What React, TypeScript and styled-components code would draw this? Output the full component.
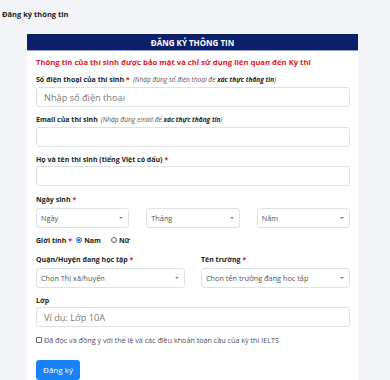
import styled, { createGlobalStyle } from "styled-components";

const GlobalStyle = createGlobalStyle`
  body {
    margin: 0;
    background: #f4f5f9;
    font-family: "Open Sans", "Noto Sans", sans-serif;
  }
  * { box-sizing: border-box; }
`;

const Page = styled.div`
  padding: 9px 0 0 2px;
`;

const PageTitle = styled.div`
  font-size: 7.5px;
  line-height: 10px;
  font-weight: 700;
  color: #222;
  margin-bottom: 15px;
`;

const Card = styled.div`
  margin-left: 25px;
  width: 331px;
  background: #fff;
  min-height: 400px;
`;

const CardHeader = styled.div`
  height: 17px;
  background: #0b1f6b;
  border-bottom: 1px solid #8ea0d6;
  color: #fff;
  font-size: 8px;
  font-weight: 700;
  display: flex;
  align-items: center;
  justify-content: center;
`;

const CardBody = styled.div`
  padding: 6px 8px 0 9px;
`;

const Notice = styled.div`
  color: #e3151d;
  font-size: 7.7px;
  font-weight: 700;
  line-height: 10px;
  margin-bottom: 8px;
`;

const Field = styled.div<{ $mb?: number }>`
  margin-bottom: ${(p) => p.$mb ?? 8}px;
`;

const Label = styled.div<{ $gap?: number }>`
  font-size: 7px;
  font-weight: 700;
  line-height: 10px;
  color: #222;
  margin-bottom: ${(p) => p.$gap ?? 2}px;
  white-space: nowrap;
`;

const Req = styled.span`
  color: #e3151d;
  margin-left: 2px;
`;

const Note = styled.span`
  font-size: 6.6px;
  font-weight: 400;
  font-style: italic;
  color: #555;
  margin-left: 3px;

  b {
    color: #222;
    font-weight: 700;
  }
`;

const Input = styled.input`
  display: block;
  width: 100%;
  height: 20px;
  border: 1px solid #dfe2e8;
  border-radius: 3px;
  padding: 0 7px;
  font-family: inherit;
  font-size: 9.2px;
  color: #333;
  background: #fff;
  outline: none;

  &::placeholder {
    color: #7a7a7a;
  }
`;

const Row = styled.div<{ $cols: number; $gap: number }>`
  display: grid;
  grid-template-columns: repeat(${(p) => p.$cols}, 1fr);
  column-gap: ${(p) => p.$gap}px;
`;

const SelectWrap = styled.div`
  position: relative;

  &::after {
    content: "";
    position: absolute;
    right: 6px;
    top: 9px;
    border-left: 2px solid transparent;
    border-right: 2px solid transparent;
    border-top: 2.5px solid #888;
    pointer-events: none;
  }
`;

const Select = styled.select`
  display: block;
  width: 100%;
  height: 20px;
  appearance: none;
  border: 1px solid #dfe2e8;
  border-radius: 3px;
  padding: 0 4px;
  font-family: inherit;
  font-size: 7.3px;
  color: #555;
  background: #fff;
  outline: none;
`;

const RadioRow = styled.div`
  display: flex;
  align-items: center;
  height: 10px;
  font-size: 7px;
  font-weight: 700;
  color: #222;
  margin-bottom: 10px;
`;

const RadioItem = styled.label`
  display: flex;
  align-items: center;
  gap: 2px;
  margin-left: 4px;
  margin-right: 6px;
`;

const RadioDot = styled.span<{ $on?: boolean }>`
  width: 6px;
  height: 6px;
  border-radius: 50%;
  border: ${(p) => (p.$on ? "1.5px solid #1a73e8" : "0.7px solid #666")};
  background: #fff;
  box-shadow: ${(p) => (p.$on ? "inset 0 0 0 0.8px #fff, inset 0 0 0 3px #1a73e8" : "none")};
`;

const CheckRow = styled.label`
  display: flex;
  align-items: center;
  gap: 2px;
  height: 10px;
  font-size: 7.2px;
  color: #4d5166;
  margin-bottom: 11px;
`;

const CheckBox = styled.span`
  width: 6px;
  height: 6px;
  border: 0.7px solid #666;
  border-radius: 1px;
  background: #fff;
`;

const SubmitButton = styled.button`
  width: 44px;
  height: 20px;
  border: none;
  border-radius: 3px;
  background: #1a82f7;
  color: #fff;
  font-family: inherit;
  font-size: 8px;
  padding: 0;
`;

export default function App() {
  return (
    <>
      <GlobalStyle />
      <Page>
        <PageTitle>Đăng ký thông tin</PageTitle>
        <Card>
          <CardHeader>ĐĂNG KÝ THÔNG TIN</CardHeader>
          <CardBody>
            <Notice>
              Thông tin của thí sinh được bảo mật và chỉ sử dụng liên quan đến Kỳ thi
            </Notice>

            <Field>
              <Label>
                Số điện thoại của thí sinh<Req>*</Req>
                <Note>
                  (Nhập đúng số điện thoại để <b>xác thực thông tin</b>)
                </Note>
              </Label>
              <Input placeholder="Nhập số điện thoại" />
            </Field>

            <Field>
              <Label>
                Email của thí sinh
                <Note>
                  (Nhập đúng email để <b>xác thực thông tin</b>)
                </Note>
              </Label>
              <Input />
            </Field>

            <Field $mb={9}>
              <Label $gap={1}>
                Họ và tên thí sinh (tiếng Việt có dấu)<Req>*</Req>
              </Label>
              <Input />
            </Field>

            <Field $mb={7}>
              <Label $gap={3}>
                Ngày sinh<Req>*</Req>
              </Label>
              <Row $cols={3} $gap={17}>
                <SelectWrap>
                  <Select>
                    <option>Ngày</option>
                  </Select>
                </SelectWrap>
                <SelectWrap>
                  <Select>
                    <option>Tháng</option>
                  </Select>
                </SelectWrap>
                <SelectWrap>
                  <Select>
                    <option>Năm</option>
                  </Select>
                </SelectWrap>
              </Row>
            </Field>

            <RadioRow>
              Giới tính<Req>*</Req>
              <RadioItem>
                <RadioDot $on />
                Nam
              </RadioItem>
              <RadioItem>
                <RadioDot />
                Nữ
              </RadioItem>
            </RadioRow>

            <Row $cols={2} $gap={16}>
              <Field>
                <Label $gap={3}>
                  Quận/Huyện đang học tập<Req>*</Req>
                </Label>
                <SelectWrap>
                  <Select>
                    <option>Chọn Thị xã/huyện</option>
                  </Select>
                </SelectWrap>
              </Field>
              <Field>
                <Label $gap={3}>
                  Tên trường<Req>*</Req>
                </Label>
                <SelectWrap>
                  <Select>
                    <option>Chọn tên trường đang học tập</option>
                  </Select>
                </SelectWrap>
              </Field>
            </Row>

            <Field>
              <Label $gap={1}>Lớp</Label>
              <Input placeholder="Ví dụ: Lớp 10A" />
            </Field>

            <CheckRow>
              <CheckBox />
              Đã đọc và đồng ý với thể lệ và các điều khoản toàn cầu của kỳ thi IELTS
            </CheckRow>

            <SubmitButton>Đăng ký</SubmitButton>
          </CardBody>
        </Card>
      </Page>
    </>
  );
}
